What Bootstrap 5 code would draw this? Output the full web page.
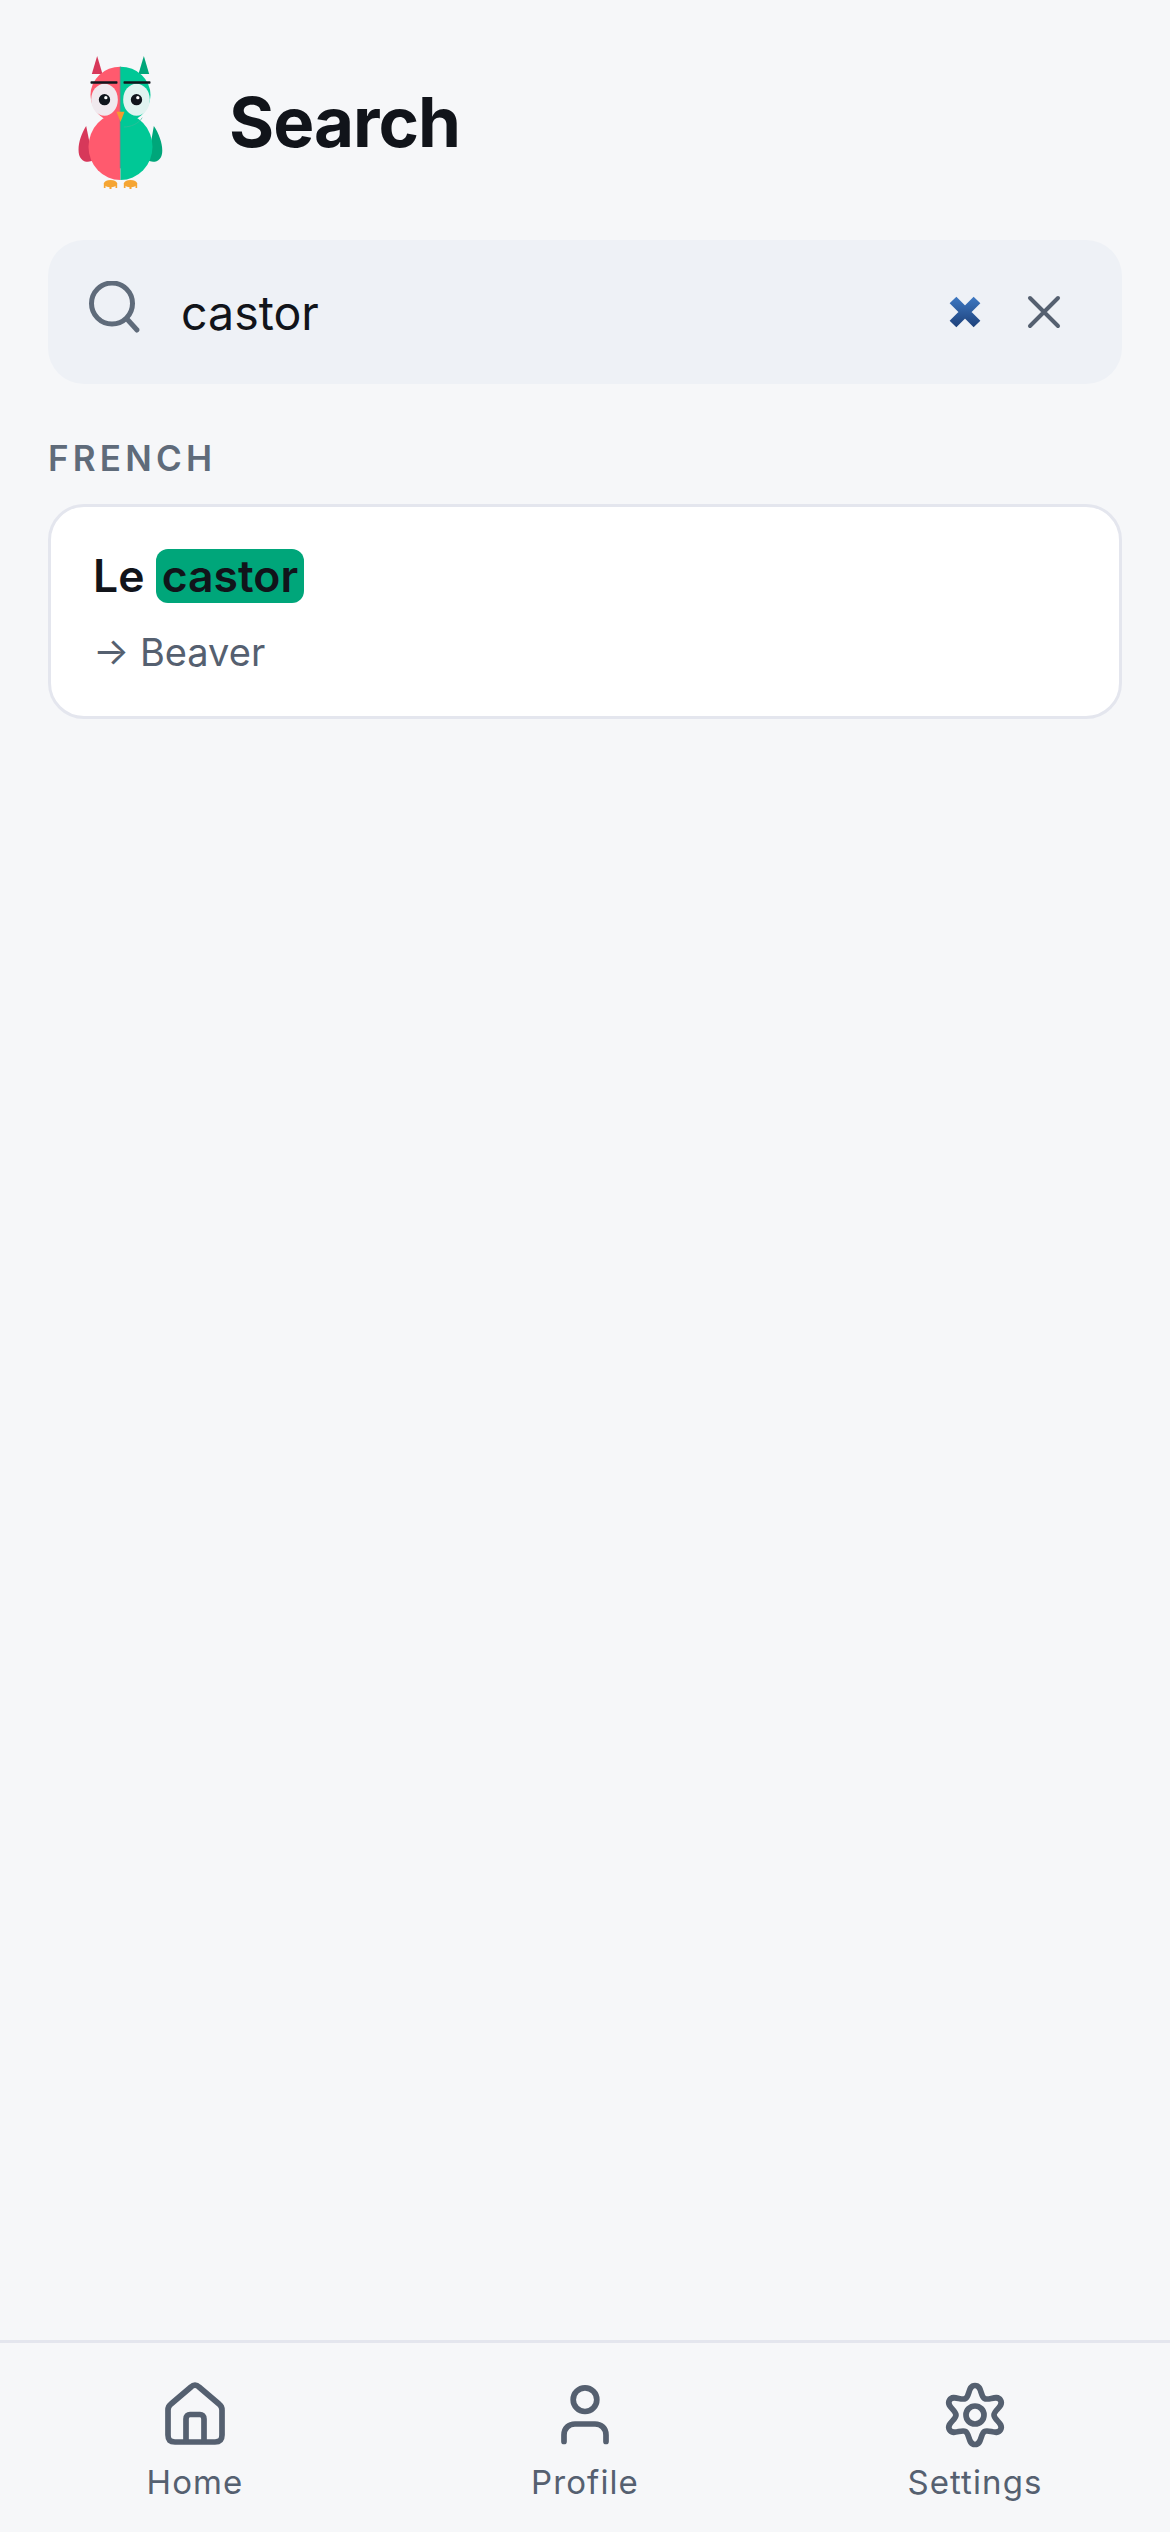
<!DOCTYPE html>
<html lang="en">
<head>
  <meta charset="UTF-8">
  <meta name="viewport" content="width=device-width, initial-scale=1.0">
  <title>Search</title>
  <link href="https://cdn.jsdelivr.net/npm/bootstrap@5.3.2/dist/css/bootstrap.min.css" rel="stylesheet">
  <style>
    body {
      background: #f6f7f9;
      color: #11141a;
      font-family: Inter, "Liberation Sans", sans-serif;
    }
    .page-head { padding: 55px 48px 0 77px; height: 240px; }
    .owl-logo { width: 87px; height: 135px; margin-right: 65px; }
    .page-title { font-size: 69px; font-weight: 700; letter-spacing: -1px; margin: 0; line-height: 135px; }
    .search-box { height: 144px; margin: 0 48px; padding: 0 60px 0 40px; background: #eef1f6; border-radius: 36px; }
    .search-text { font-size: 46.5px; margin-left: 39px; padding-top: 3px; }
    .clear-emoji { margin-right: 43px; }
    .lang-label { font-size: 35px; font-weight: 600; letter-spacing: 4.2px; color: #5f6b7a; margin: 54px 48px 0; line-height: 40px; }
    .result-box { margin: 26px 48px 0; height: 215px; padding: 42px 42px 0; background: #fff; border: 3px solid #e4e6ee; border-radius: 36px; }
    .result-word { font-size: 44.5px; font-weight: 600; line-height: 54px; }
    .hit { background: #00a67a; border-radius: 12px; padding: 0 6px; color: #11141a; }
    .result-trans { font-size: 38px; color: #556070; line-height: 48px; margin-top: 25px; }
    .tab-bar { border-top: 3px solid #e4e6ee; height: 192px; padding-top: 36px; }
    .tab-item { color: #556070; font-size: 33px; letter-spacing: 1.1px; line-height: 40px; }
    .tab-icon { width: 72px; height: 72px; display: block; margin: 0 auto 11px; fill: none; stroke: #556070; stroke-width: 5.7; stroke-linecap: round; stroke-linejoin: round; }
  </style>
</head>
<body class="d-flex flex-column vh-100 overflow-hidden">
  <header class="page-head d-flex align-items-start">
    <svg class="owl-logo flex-shrink-0" viewBox="110 75 260 405">
      <defs>
        <clipPath id="left-half"><rect x="100" y="100" width="140" height="360"/></clipPath>
        <clipPath id="right-half"><rect x="240" y="100" width="140" height="360"/></clipPath>
      </defs>
      <path d="M170 78 154 132H186Z" fill="#d7385a"/>
      <path d="M310 78 294 132H326Z" fill="#00a67a"/>
      <path d="M137 288C116 320 106 368 122 386 132 398 148 397 158 391Z" fill="#d7385a"/>
      <path d="M340 288C362 320 374 368 358 386 348 398 332 397 322 391Z" fill="#00a67a"/>
      <g clip-path="url(#left-half)" fill="#ff5a6e">
        <ellipse cx="240" cy="195" rx="90" ry="85"/>
        <ellipse cx="240" cy="350" rx="96" ry="100"/>
      </g>
      <g clip-path="url(#right-half)" fill="#00c896">
        <ellipse cx="240" cy="195" rx="90" ry="85"/>
        <ellipse cx="240" cy="350" rx="96" ry="100"/>
      </g>
      <rect x="238" y="110" width="3" height="305" fill="#3d9c8c"/>
      <path d="M250 291C270 291 295 281 305 263" fill="none" stroke="#3db89a" stroke-width="2"/>
      <ellipse cx="192" cy="209" rx="40" ry="48" fill="#f0e9ee"/>
      <ellipse cx="288" cy="209" rx="40" ry="48" fill="#e0f3f0"/>
      <circle cx="192" cy="209" r="17" fill="#10151c"/>
      <circle cx="288" cy="209" r="17" fill="#10151c"/>
      <circle cx="196" cy="203" r="5" fill="#fff"/>
      <circle cx="292" cy="203" r="5" fill="#fff"/>
      <rect x="150" y="154" width="81" height="7" rx="2" fill="#10151c"/>
      <rect x="249" y="154" width="81" height="7" rx="2" fill="#10151c"/>
      <path d="M228 245H252L240 276Z" fill="#f59a2e"/>
      <g fill="#f5a533">
        <ellipse cx="210" cy="461" rx="20" ry="11"/>
        <ellipse cx="270" cy="461" rx="20" ry="11"/>
        <path d="M190 460h5v14h-5ZM207 460h6v17h-6ZM225 460h5v14h-5ZM250 460h5v14h-5ZM267 460h6v17h-6ZM285 460h5v14h-5Z"/>
      </g>
    </svg>
    <h1 class="page-title">Search</h1>
  </header>

  <div class="search-box d-flex align-items-center">
    <svg width="54" height="62" viewBox="0 0 54 62" class="flex-shrink-0" fill="none" stroke="#5f6b7a" stroke-width="5" stroke-linecap="round">
      <circle cx="24" cy="22.500" r="20.500"/>
      <path d="M39 38 49 49"/>
    </svg>
    <span class="search-text flex-grow-1">castor</span>
    <svg width="36" height="36" viewBox="0 0 36 36" class="clear-emoji">
      <defs>
        <linearGradient id="blue-x" gradientUnits="userSpaceOnUse" x1="0" y1="2" x2="0" y2="34">
          <stop offset="0" stop-color="#3f7ac4"/>
          <stop offset="1" stop-color="#1c3f78"/>
        </linearGradient>
      </defs>
      <path d="M6 6 30 30M30 6 6 30" fill="none" stroke="url(#blue-x)" stroke-width="9.500"/>
    </svg>
    <svg width="36" height="36" viewBox="0 0 36 36" fill="none" stroke="#556070" stroke-width="4" stroke-linecap="round">
      <path d="M4 4 32 32M32 4 4 32"/>
    </svg>
  </div>

  <div class="lang-label">FRENCH</div>
  <div class="result-box">
    <div class="result-word">Le <span class="hit">castor</span></div>
    <div class="result-trans">→ Beaver</div>
  </div>

  <nav class="tab-bar row g-0 mt-auto">
    <div class="col-4 text-center tab-item">
      <svg class="tab-icon" viewBox="0 0 72 72">
        <path d="M9 31C9 28.500 10 26.500 12 25L32 8C34.500 5.500 37.500 5.500 40 8L60 25C62 26.500 63 28.500 63 31V56C63 61 61 63 56 63H16C11 63 9 61 9 56Z"/>
        <path d="M27 62V40C27 37 29 35.500 31 35.500H41C43 35.500 45 37 45 40V62"/>
      </svg>
      Home
    </div>
    <div class="col-4 text-center tab-item">
      <svg class="tab-icon" viewBox="0 0 72 72">
        <circle cx="36" cy="20.700" r="11.800"/>
        <path d="M15 62.500V56C15 49 20 45 26 45H46C52 45 57 49 57 56V62.500"/>
      </svg>
      Profile
    </div>
    <div class="col-4 text-center tab-item">
      <svg class="tab-icon" viewBox="0 0 72 72">
        <circle cx="36" cy="36" r="9"/>
        <path d="M36 6.500C43 6.500 41.170 17.050 45.500 19.550 49.830 22.050 58.050 15.190 61.550 21.250 65.050 27.310 55 31 55 36 55 41 65.050 44.690 61.550 50.750 58.050 56.810 49.830 49.950 45.500 52.450 41.170 54.950 43 65.500 36 65.500 29 65.500 30.830 54.950 26.500 52.450 22.170 49.950 13.950 56.810 10.450 50.750 6.950 44.690 17 41 17 36 17 31 6.950 27.310 10.450 21.250 13.950 15.190 22.170 22.050 26.500 19.550 30.830 17.050 29 6.500 36 6.500Z"/>
      </svg>
      Settings
    </div>
  </nav>
</body>
</html>
